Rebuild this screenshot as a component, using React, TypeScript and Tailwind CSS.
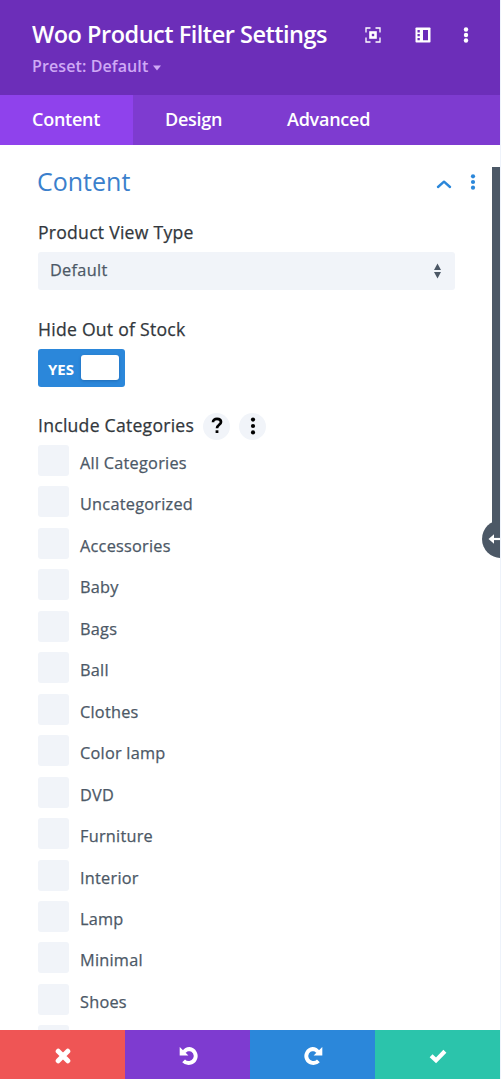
import React from "react";

const categories = [
  "All Categories",
  "Uncategorized",
  "Accessories",
  "Baby",
  "Bags",
  "Ball",
  "Clothes",
  "Color lamp",
  "DVD",
  "Furniture",
  "Interior",
  "Lamp",
  "Minimal",
  "Shoes",
  "",
];

function Dots({ className, r = 2, gap = 6 }: { className?: string; r?: number; gap?: number }) {
  return (
    <svg width="6" height="18" viewBox="0 0 6 18" fill="currentColor" className={className}>
      <circle cx="3" cy={9 - gap} r={r} />
      <circle cx="3" cy="9" r={r} />
      <circle cx="3" cy={9 + gap} r={r} />
    </svg>
  );
}

function Header() {
  return (
    <header className="flex h-[95px] shrink-0 justify-between bg-[#6c2eb9] pl-8 pr-[31px]">
      <div className="pt-[19px]">
        <h1 className="h-[30px] whitespace-nowrap text-[23.5px] font-semibold leading-[30px] tracking-[-0.49px] text-white">
          Woo Product Filter Settings
        </h1>
        <button className="mt-[7px] flex h-5 items-center whitespace-nowrap text-[16px] font-semibold leading-5 tracking-[0.1px] text-[#cfa9f5]">
          Preset: Default
          <svg width="8" height="6" viewBox="0 0 8 6" className="ml-[5px] mt-[3px]" fill="currentColor">
            <path d="M0 0.5h8L4 5.5z" />
          </svg>
        </button>
      </div>
      <div className="mt-[26px] flex h-[18px] items-center text-white">
        <svg width="16" height="16" viewBox="0 0 16 16" fill="none" stroke="currentColor">
          <path d="M1 5.5V1h4.5M10.5 1H15v4.5M15 10.5V15h-4.5M5.5 15H1v-4.5" strokeWidth="1.3" />
          <rect x="5.5" y="5.5" width="5" height="5" strokeWidth="2.6" />
        </svg>
        <svg width="16" height="16" viewBox="0 0 16 16" className="ml-[34px]">
          <rect x="0.5" y="0.5" width="15" height="15" rx="0.8" fill="currentColor" />
          <path d="M2.5 3h2.3v2.4H2.5zM2.5 7h2.3v2.3H2.5zM2.5 11h2.3v2.2H2.5zM8 3h5v10.3H8z" fill="#6c2eb9" />
        </svg>
        <Dots className="ml-[32px]" r={2.2} gap={5.5} />
      </div>
    </header>
  );
}

function Label({ children }: { children: React.ReactNode }) {
  return (
    <span className="whitespace-nowrap text-[17.6px] font-medium leading-[24px] tracking-[0.25px] text-[#32373c] [-webkit-text-stroke:0.25px_#32373c]">
      {children}
    </span>
  );
}

export default function App() {
  return (
    <div className="relative flex h-[1079px] w-[501px] flex-col overflow-hidden border-r border-[#eef3fb] bg-white font-['Open_Sans',sans-serif]">
      <Header />
      <nav className="flex h-[50px] shrink-0 bg-[#7e3bd0] text-[18px] font-semibold leading-[46px] tracking-[-0.25px] text-white">
        <button className="w-[133px] bg-[#8f42ec] pb-[2px] pl-8 text-left">Content</button>
        <button className="w-[122px] pb-[2px] pl-8 text-left">Design</button>
        <button className="pb-[2px] pl-8 text-left">Advanced</button>
      </nav>

      <main className="flex min-h-0 flex-1 justify-between overflow-hidden">
        <div className="w-[440px] shrink-0 pl-[38px] pt-[19px]">
          <div className="flex h-[34px] items-center justify-between">
            <h2 className="-ml-px text-[25px] leading-[32px] text-[#3b80cc]">Content</h2>
            <svg width="16" height="10" viewBox="0 0 16 10" fill="none" className="-mr-[12px] mt-[5px]">
              <path d="M2 8L8 2.7L14 8" stroke="#2b87da" strokeWidth="2.4" strokeLinecap="round" strokeLinejoin="round" />
            </svg>
          </div>

          <div className="mt-[22px] h-8"><Label>Product View Type</Label></div>
          <button className="flex h-[38px] w-[417px] items-center justify-between rounded-[3px] bg-[#f1f4f9] pl-3 pr-[14px] text-[16.3px] font-medium tracking-[0.3px] text-[#4c5866]">
            <span className="-mt-[2px] [-webkit-text-stroke:0.25px_#4c5866]">Default</span>
            <svg width="7" height="16" viewBox="0 0 7 16" fill="#4c5866">
              <path d="M3.5 0.5L7 7H0zM0 9h7l-3.5 6.5z" />
            </svg>
          </button>

          <div className="mt-[27px] h-8"><Label>Hide Out of Stock</Label></div>
          <button className="flex h-[38px] w-[87px] items-center justify-between rounded-[3px] bg-[#2b87da] pl-[10px] pr-[6px] text-white">
            <span className="mt-[2px] text-[15px] font-bold leading-5">YES</span>
            <span className="-mt-px h-[25px] w-[38px] rounded-[3px] bg-white shadow-[0_1px_3px_rgba(0,30,80,0.25)]" />
          </button>

          <div className="mt-[25px] flex h-7 items-center">
            <span className="-mt-px w-[165px]"><Label>Include Categories</Label></span>
            <button className="flex h-[27px] w-[27px] items-center justify-center rounded-full bg-[#f1f4f9]">
              <svg width="12" height="18" viewBox="0 0 12 18" fill="none">
                <path d="M2 5.2C2 3 3.6 1.8 6 1.8S10 3 10 5c0 2.8-4 2.9-4 6.3" stroke="black" strokeWidth="2.7" />
                <rect x="4.6" y="13.3" width="2.8" height="2.7" fill="black" />
              </svg>
            </button>
            <button className="ml-[9px] flex h-[27px] w-[27px] items-center justify-center rounded-full bg-[#f1f4f9] text-black">
              <Dots r={2.1} gap={6.4} />
            </button>
          </div>

          <div className="mt-[5px]">
            {categories.map((name, i) => (
              <div key={i} className="flex h-[41.46px] items-start">
                <span className="h-[31px] w-[31px] shrink-0 rounded-[3px] bg-[#f1f4f9]" />
                <span className="ml-[11px] mt-[7px] whitespace-nowrap text-[16.3px] font-medium leading-[22px] tracking-[0.25px] text-[#4c5866] [-webkit-text-stroke:0.25px_#4c5866]">
                  {name}
                </span>
              </div>
            ))}
          </div>
        </div>

        <div className="flex">
          <Dots className="mr-[16px] mt-7 text-[#2b87da]" r={2.1} gap={5.7} />
          <div className="mt-[22px] h-[370px] w-2 bg-[#4c5866]" />
        </div>
      </main>

      <footer className="grid h-[49px] shrink-0 grid-cols-4 text-white">
        <button className="flex items-center justify-center bg-[#ef5555]">
          <svg width="16" height="16" viewBox="0 0 16 16" stroke="currentColor" strokeWidth="5" strokeLinecap="round" className="mt-[2px]">
            <path d="M3.2 3.2l9.6 9.6M12.8 3.2l-9.6 9.6" />
          </svg>
        </button>
        <button className="flex items-center justify-center bg-[#7e3bd0]">
          <svg width="20" height="20" viewBox="0 0 20 20" className="ml-[2px] mt-[2px]">
            <path d="M5 6C6.3 4.1 8.2 3 10.4 3A7 7 0 1 1 4.6 14.8" fill="none" stroke="currentColor" strokeWidth="3.9" />
            <path d="M.7 1L9.4 9.4H.7z" fill="currentColor" />
          </svg>
        </button>
        <button className="flex items-center justify-center bg-[#2b87da]">
          <svg width="20" height="20" viewBox="0 0 20 20" className="mt-[2px]">
            <path d="M15 6C13.7 4.1 11.8 3 9.6 3A7 7 0 1 0 15.4 14.8" fill="none" stroke="currentColor" strokeWidth="3.9" />
            <path d="M19.3 1L10.6 9.4h8.7z" fill="currentColor" />
          </svg>
        </button>
        <button className="flex items-center justify-center bg-[#2bc4ab]">
          <svg width="18" height="16" viewBox="0 0 18 16" fill="none" className="mt-[2px]">
            <path d="M2.1 7.8L7 12.4L15.9 3.2" stroke="currentColor" strokeWidth="4.2" />
          </svg>
        </button>
      </footer>

      <div className="absolute left-[482px] top-[520px] flex h-[38px] w-[38px] items-center rounded-full bg-[#4c5866] pl-[5px]">
        <svg width="20" height="12" viewBox="0 0 20 12">
          <path d="M4 6h16" stroke="white" strokeWidth="2.2" />
          <path d="M7 1.2L1.5 6L7 10.8z" fill="white" />
        </svg>
      </div>
      <div className="absolute -right-px top-0 h-10 w-px bg-[#15101d]" />
    </div>
  );
}
